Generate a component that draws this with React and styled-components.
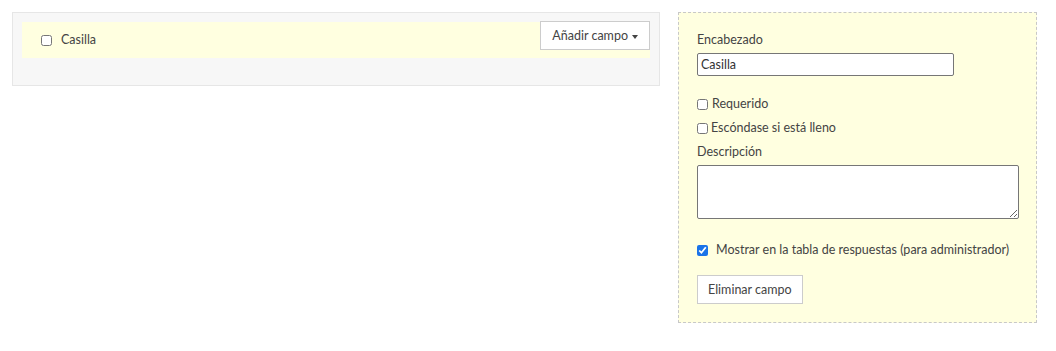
import React from "react";
import styled, { createGlobalStyle } from "styled-components";

const Global = createGlobalStyle`
  html, body { margin: 0; padding: 0; background: #fff; }
  body { font-family: Lato, "Liberation Sans", sans-serif; font-size: 12.5px; color: #444; }
`;

const Page = styled.div`
  display: flex;
  align-items: flex-start;
  gap: 18px;
  padding: 12px;
`;

const Canvas = styled.div`
  width: 648px;
  box-sizing: border-box;
  background: #f7f7f7;
  border: 1px solid #e6e6e6;
  padding: 9px 9px 27px;
`;

const FieldRow = styled.div`
  display: flex;
  justify-content: space-between;
  align-items: flex-start;
  height: 36px;
  background: #ffffe0;
  padding-left: 19px;
`;

const Check = styled.input.attrs({ type: "checkbox" })`
  width: 11px;
  height: 11px;
  margin: 0;
  flex: none;
  accent-color: #1a73e8;
`;

const RowLabel = styled.label`
  display: flex;
  align-items: center;
  gap: ${(p) => p.$gap || 9}px;
  height: ${(p) => p.$h}px;
  margin-bottom: ${(p) => p.$mb || 0}px;
  line-height: 18px;
  white-space: nowrap;
`;

const Button = styled.button`
  font: inherit;
  color: #444;
  background: #fff;
  border: 1px solid #ccc;
  border-radius: 0;
  height: 29px;
  padding: 0 ${(p) => p.$px || 12}px;
  margin-top: ${(p) => p.$mt || 0}px;
  display: inline-flex;
  align-items: center;
  gap: 4px;
  cursor: pointer;
`;

const Caret = styled.span`
  width: 0;
  height: 0;
  border-left: 3.5px solid transparent;
  border-right: 3.5px solid transparent;
  border-top: 4px solid #444;
  margin-top: 2px;
`;

const Editor = styled.div`
  width: 359px;
  box-sizing: border-box;
  background: #ffffe0;
  border: 1px dashed #c8c8c8;
  padding: 18px;
  display: flex;
  flex-direction: column;
  align-items: flex-start;
`;

const Label = styled.div`
  line-height: 18px;
  margin-top: ${(p) => p.$mt || 0}px;
  margin-bottom: ${(p) => p.$mb || 0}px;
`;

const TextInput = styled.input`
  font: inherit;
  color: #333;
  width: 257px;
  height: 23px;
  box-sizing: border-box;
  border: 1px solid #767676;
  border-radius: 2px;
  padding: 0 3px;
  background: #fff;
  margin-bottom: ${(p) => p.$mb || 0}px;
`;

const TextArea = styled.textarea`
  font: inherit;
  width: 322px;
  height: 54px;
  box-sizing: border-box;
  border: 1px solid #767676;
  border-radius: 2px;
  background: #fff;
  display: block;
  margin-bottom: 24px;
`;

export default function App() {
  return (
    <>
      <Global />
      <Page>
        <Canvas>
          <FieldRow>
            <RowLabel $h={36}>
              <Check />
              Casilla
            </RowLabel>
            <Button $mt={-1} $px={11}>
              Añadir campo <Caret />
            </Button>
          </FieldRow>
        </Canvas>
        <Editor>
          <Label $mb={4}>Encabezado</Label>
          <TextInput defaultValue="Casilla" $mb={16} />
          <RowLabel $gap={4} $h={24}>
            <Check />
            Requerido
          </RowLabel>
          <RowLabel $gap={3} $h={24}>
            <Check />
            Escóndase si está lleno
          </RowLabel>
          <Label $mt={3} $mb={4}>Descripción</Label>
          <TextArea />
          <RowLabel $gap={8} $h={14} $mb={18}>
            <Check defaultChecked />
            Mostrar en la tabla de respuestas (para administrador)
          </RowLabel>
          <Button $px={10}>Eliminar campo</Button>
        </Editor>
      </Page>
    </>
  );
}
